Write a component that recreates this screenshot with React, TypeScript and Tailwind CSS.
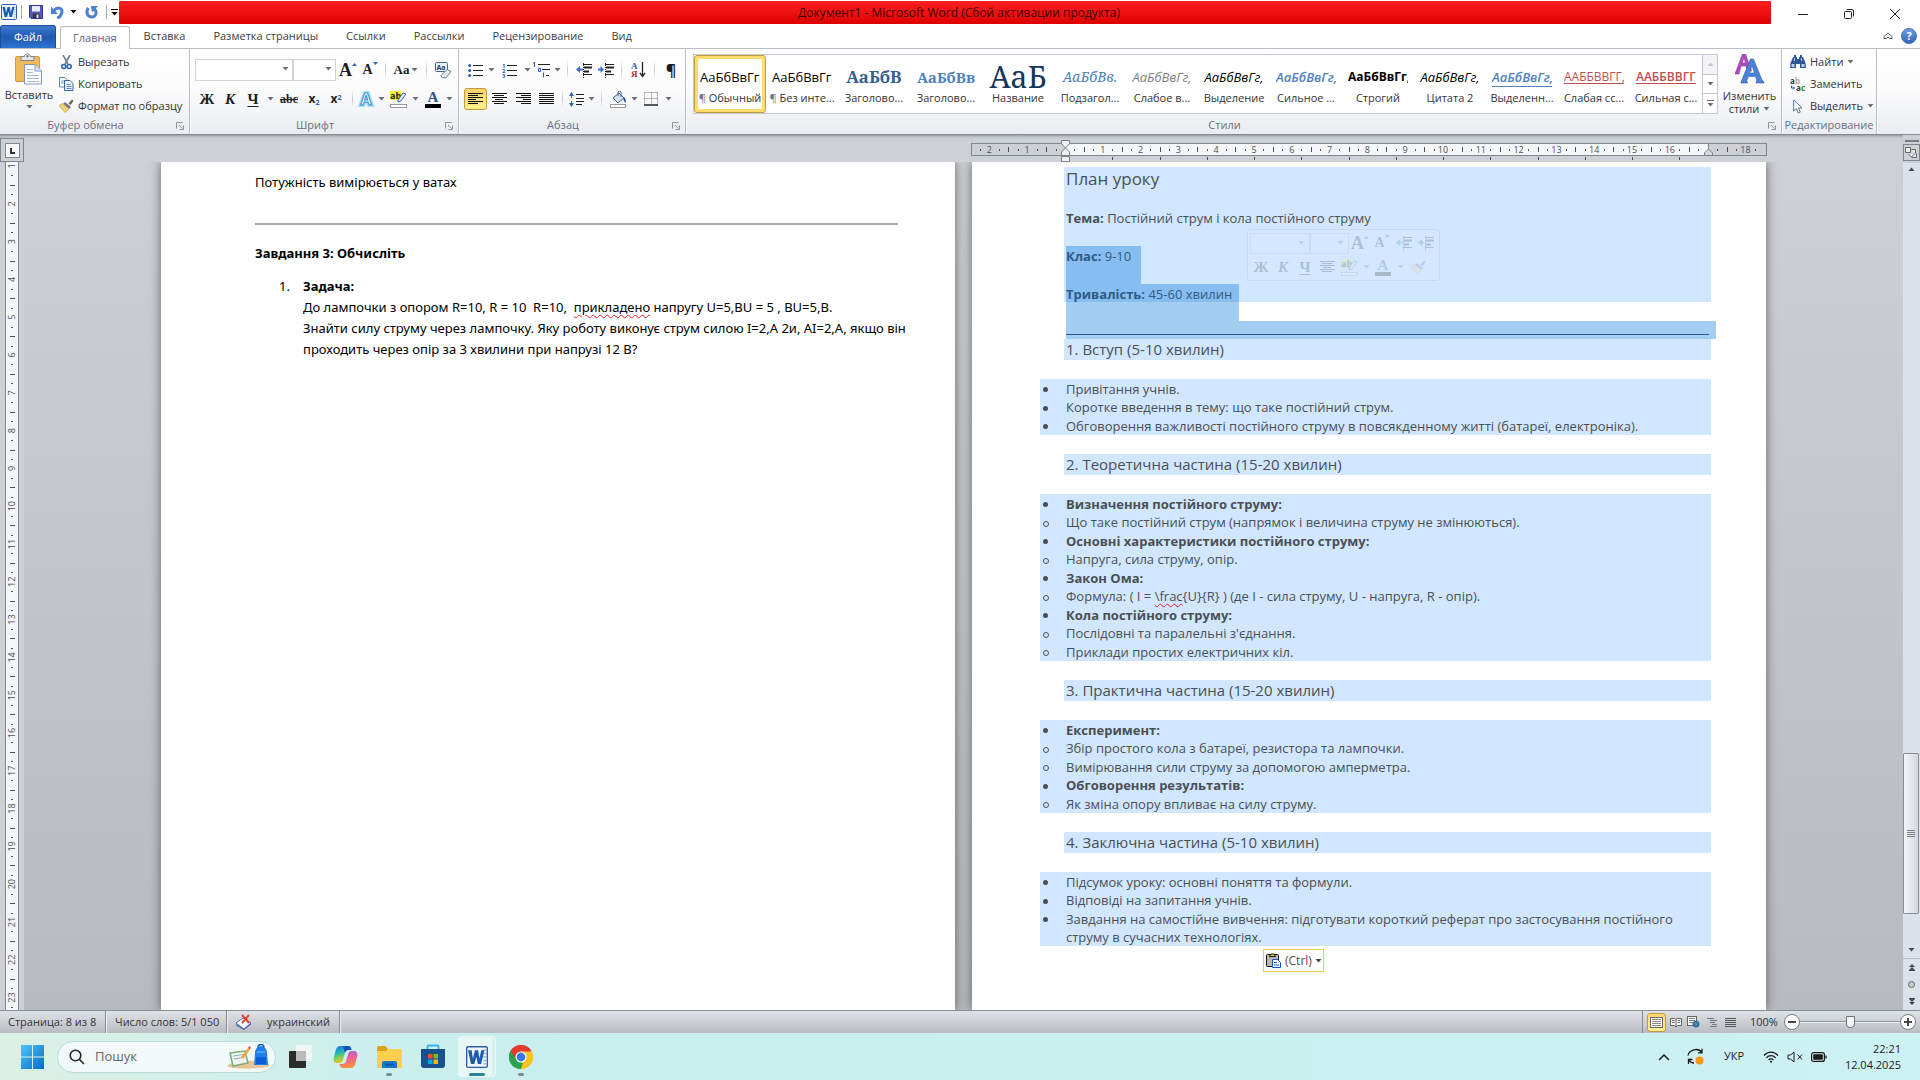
import type { ReactNode } from "react";
import clsx from "clsx";

const CM = 37.8;

const tabs = ["Главная", "Вставка", "Разметка страницы", "Ссылки", "Рассылки", "Рецензирование", "Вид"];

type StyleItem = { label: string; sample: string; look: string; mark?: boolean };

const styleItems: StyleItem[] = [
  { label: "Обычный", sample: "АаБбВвГг,", look: "text-[13px] text-black", mark: true },
  { label: "Без инте...", sample: "АаБбВвГг,", look: "text-[13px] text-black", mark: true },
  { label: "Заголово...", sample: "АаБбВ", look: "font-[Noto_Serif,Liberation_Serif,serif] text-[17px] font-bold text-[#365f91]" },
  { label: "Заголово...", sample: "АаБбВв", look: "font-[Noto_Serif,Liberation_Serif,serif] text-[15px] font-bold text-[#4f81bd]" },
  { label: "Название", sample: "АаБ", look: "font-[Noto_Serif,Liberation_Serif,serif] text-[30px] text-[#17365d]" },
  { label: "Подзагол...", sample: "АаБбВв.", look: "font-[Noto_Serif,Liberation_Serif,serif] text-[14px] italic text-[#4f81bd]" },
  { label: "Слабое в...", sample: "АаБбВвГг,", look: "text-[13px] italic text-[#808080]" },
  { label: "Выделение", sample: "АаБбВвГг,", look: "text-[13px] italic text-black" },
  { label: "Сильное ...", sample: "АаБбВвГг,", look: "text-[13px] font-semibold italic text-[#4f81bd]" },
  { label: "Строгий", sample: "АаБбВвГг,", look: "text-[12px] font-bold text-black" },
  { label: "Цитата 2", sample: "АаБбВвГг,", look: "text-[13px] italic text-black" },
  { label: "Выделенн...", sample: "АаБбВвГг,", look: "text-[13px] font-semibold italic text-[#4f81bd] underline underline-offset-4" },
  { label: "Слабая сс...", sample: "ААБбВвГг,", look: "text-[12px] uppercase text-[#c0504d] underline underline-offset-2" },
  { label: "Сильная с...", sample: "ААБбВвГг,", look: "text-[12px] font-semibold uppercase text-[#c0504d] underline underline-offset-2" },
];

type Line = { level: 1 | 2; text: ReactNode; bold?: boolean };
type Section = { title: string; height: string; lines: Line[] };

const sections: Section[] = [
  {
    title: "1. Вступ (5-10 хвилин)",
    height: "min-h-[56px]",
    lines: [
      { level: 1, text: "Привітання учнів." },
      { level: 1, text: "Коротке введення в тему: що таке постійний струм." },
      { level: 1, text: "Обговорення важливості постійного струму в повсякденному житті (батареї, електроніка)." },
    ],
  },
  {
    title: "2. Теоретична частина (15-20 хвилин)",
    height: "min-h-[167px]",
    lines: [
      { level: 1, bold: true, text: "Визначення постійного струму:" },
      { level: 2, text: "Що таке постійний струм (напрямок і величина струму не змінюються)." },
      { level: 1, bold: true, text: "Основні характеристики постійного струму:" },
      { level: 2, text: "Напруга, сила струму, опір." },
      { level: 1, bold: true, text: "Закон Ома:" },
      {
        level: 2,
        text: (
          <>
            Формула: ( I = <Misspelled>\frac</Misspelled>{"{U}{R} ) (де I - сила струму, U - напруга, R - опір)."}
          </>
        ),
      },
      { level: 1, bold: true, text: "Кола постійного струму:" },
      { level: 2, text: "Послідовні та паралельні з'єднання." },
      { level: 2, text: "Приклади простих електричних кіл." },
    ],
  },
  {
    title: "3. Практична частина (15-20 хвилин)",
    height: "min-h-[93px]",
    lines: [
      { level: 1, bold: true, text: "Експеримент:" },
      { level: 2, text: "Збір простого кола з батареї, резистора та лампочки." },
      { level: 2, text: "Вимірювання сили струму за допомогою амперметра." },
      { level: 1, bold: true, text: "Обговорення результатів:" },
      { level: 2, text: "Як зміна опору впливає на силу струму." },
    ],
  },
  {
    title: "4. Заключна частина (5-10 хвилин)",
    height: "min-h-[74px]",
    lines: [
      { level: 1, text: "Підсумок уроку: основні поняття та формули." },
      { level: 1, text: "Відповіді на запитання учнів." },
      {
        level: 1,
        text: (
          <>
            Завдання на самостійне вивчення: підготувати короткий реферат про застосування постійного
            <br />
            струму в сучасних технологіях.
          </>
        ),
      },
    ],
  },
];

function Misspelled({ children }: { children: ReactNode }) {
  return <span className="underline decoration-[#e02020] decoration-wavy decoration-1 underline-offset-2">{children}</span>;
}

/* ---------- small pieces ---------- */

function Arrow({ className = "text-[#6b6f75]" }: { className?: string }) {
  return (
    <svg width="7" height="4" viewBox="0 0 7 4" className={clsx("shrink-0", className)} aria-hidden>
      <path d="M0.5 0h6L3.5 3.6z" fill="currentColor" />
    </svg>
  );
}

function Tool({ label, w, children, active }: { label: string; w: string; children: ReactNode; active?: boolean }) {
  return (
    <button
      aria-label={label}
      className={clsx(
        "flex h-[22px] shrink-0 items-center justify-center text-[#1e1e1e]",
        w,
        active && "rounded-[3px] border border-[#c29b3f] bg-linear-to-b from-[#fbd36b] to-[#fff08a]"
      )}
    >
      {children}
    </button>
  );
}

function Sep({ w }: { w: string }) {
  return (
    <span className={clsx("flex h-5 shrink-0 justify-center", w)}>
      <span className="w-px bg-linear-to-b from-white via-[#c3c7cc] to-white" />
    </span>
  );
}

function Group({ title, className, launcher = true, children }: { title: string; className?: string; launcher?: boolean; children: ReactNode }) {
  return (
    <section className={clsx("flex shrink-0 flex-col border-r border-[#b9bdc4] shadow-[1px_0_0_#fff]", className)}>
      <div className="flex-1">{children}</div>
      <div className="flex h-[17px] items-center text-[11px] text-[#6a7080]">
        <span className="flex-1 text-center">{title}</span>
        {launcher && (
          <button aria-label={`${title}: параметры`} className="flex w-[18px] justify-center">
            <svg width="8" height="8" viewBox="0 0 8 8" fill="none" stroke="#8d9198">
              <path d="M.5 6.5v-6h6M3 3l3.5 3.5M7.5 3.5v4h-4" />
            </svg>
          </button>
        )}
      </div>
    </section>
  );
}

/* ---------- icons ---------- */

function WordIcon({ size }: { size: number }) {
  return (
    <svg width={size} height={size} viewBox="0 0 16 16" aria-hidden>
      <rect x=".5" y=".5" width="15" height="15" rx="1" fill="#eef5fd" stroke="#2b5ea7" />
      <path d="M12.500 3h2M12.500 5.500h2M12.500 8h2M12.500 10.500h2M12.500 13h2" stroke="#8db3e2" />
      <path d="M1.500 3h2.600l.9 6 1.500-6h2.300l1 6 1.300-6h2.300L11 13H8.600L7.500 7.800 6 13H3.600z" fill="#1c5cae" />
    </svg>
  );
}

function SaveIcon() {
  return (
    <svg width="14" height="14" viewBox="0 0 14 14" aria-hidden>
      <path d="M.5.500h13v13H2L.500 12z" fill="#5558b8" stroke="#34379a" />
      <path d="M3 1h8v5.500H3z" fill="#e8ecf8" />
      <path d="M4 8.500h6.500V13H4z" fill="#34343c" />
      <path d="M7.500 9.500h2V13h-2z" fill="#dfe3ee" />
    </svg>
  );
}

function UndoIcon() {
  return (
    <svg width="13" height="13" viewBox="0 0 13 13" fill="none" aria-hidden>
      <path d="M3 4.500C6 .800 11 1.500 11 5.500c0 3-2 5-4.500 7" stroke="#4a7fd2" strokeWidth="3" />
      <path d="M0 .500v7.500h7z" fill="#4a7fd2" />
    </svg>
  );
}

function RedoIcon() {
  return (
    <svg width="13" height="13" viewBox="0 0 13 13" fill="none" aria-hidden>
      <path d="M3.500 2C.800 5 1.500 10.500 6.500 11c4.500 0 6-5 3-8" stroke="#4a7fd2" strokeWidth="3" />
      <path d="M6 0h7L7 6.500z" fill="#4a7fd2" />
    </svg>
  );
}

function PasteIcon() {
  return (
    <svg width="28" height="32" viewBox="0 0 28 32" aria-hidden>
      <rect x=".5" y="3.500" width="24" height="25" rx="1.500" fill="#f0b95a" stroke="#d29a3c" />
      <path d="M6 7.500V3.500h3.500C9.500 0 15.500 0 15.500 3.500H19v4z" fill="#e4e7ea" stroke="#7c8288" />
      <circle cx="12.500" cy="3.200" r="1.200" fill="#7c8288" />
      <path d="M9.500 11.500H20l6.500 6.500v13h-17z" fill="#fff" stroke="#8095b5" />
      <path d="M20 11.500V18h6.500" fill="#dde6f3" stroke="#8095b5" />
      <path d="M12 16.500h6M12 19.500h6M12 22.500h12M12 25.500h12M12 28.500h12" stroke="#a5b6d0" />
    </svg>
  );
}

function CutIcon() {
  return (
    <svg width="11" height="15" viewBox="0 0 11 15" fill="none" aria-hidden>
      <path d="M2 0l5 9M9 0L4 9" stroke="#6f7f92" strokeWidth="1.600" />
      <circle cx="2.800" cy="11.500" r="2" stroke="#2d5fae" strokeWidth="1.600" />
      <circle cx="8.200" cy="11.500" r="2" stroke="#2d5fae" strokeWidth="1.600" />
    </svg>
  );
}

function CopyIcon() {
  return (
    <svg width="15" height="14" viewBox="0 0 15 14" aria-hidden>
      <path d="M.5.500H6L8.500 3v7H.500z" fill="#fff" stroke="#5f85bf" />
      <path d="M2 4h4M2 6h4" stroke="#7ba0d8" />
      <path d="M5.500 3.500h5.500L14 6.500v7H5.500z" fill="#eaf2fd" stroke="#3465a8" />
      <path d="M7.500 7.500h4M7.500 9.500h5M7.500 11.500h5" stroke="#5588cf" />
    </svg>
  );
}

function BrushIcon() {
  return (
    <svg width="15" height="14" viewBox="0 0 15 14" aria-hidden>
      <path d="M9.500 4.500L13 .500l1.500 1.500L11.500 6z" fill="#6a655c" />
      <path d="M6 3l6 5-2 2-6-4.500z" fill="#7b6f9c" />
      <path d="M4 4.500L0 6.500l6 7 4-3.500z" fill="#efd37a" stroke="#c39b3b" strokeWidth=".7" />
    </svg>
  );
}

function EraserIcon() {
  return (
    <svg width="18" height="17" viewBox="0 0 18 17" aria-hidden>
      <rect x="1.500" y=".5" width="12" height="9" rx="1" fill="#e9f1fb" stroke="#4c6591" />
      <text x="2.500" y="8" fontSize="7" fontWeight="700" fill="#27406e">Aa</text>
      <path d="M7 13.500L13 7.500l4 2-5 6.500-4-.5z" fill="#e6ecf5" stroke="#6d82a6" />
    </svg>
  );
}

function GrowLetter({ up }: { up?: boolean }) {
  return (
    <span className={clsx("flex items-start font-[Liberation_Serif,serif] font-bold leading-4", up ? "text-[18px]" : "text-[14px]")}>
      A
      <svg width="5" height="4" viewBox="0 0 5 4" aria-hidden>
        <path d={up ? "M0 4h5L2.500 1z" : "M0 0h5L2.500 3z"} fill="#3c62ad" />
      </svg>
    </span>
  );
}

function GlowLetter() {
  return (
    <svg width="18" height="18" viewBox="0 0 18 18" aria-hidden>
      <text x="9" y="15" fontSize="16" fontWeight="700" textAnchor="middle" fill="#fff" stroke="#a9daf3" strokeWidth="4">A</text>
      <text x="9" y="15" fontSize="16" fontWeight="700" textAnchor="middle" fill="#fff" stroke="#3a92cf" strokeWidth="1">A</text>
    </svg>
  );
}

function HighlightIcon() {
  return (
    <svg width="17" height="17" viewBox="0 0 17 17" aria-hidden>
      <rect x="0" y="0" width="11" height="9" fill="#f6ec3e" />
      <text x="0" y="8" fontSize="9" fontWeight="700" fill="#222">ab</text>
      <path d="M8 9l5-7 3 1-5 7-3 1z" fill="#dfe9f8" stroke="#4d6a9e" />
      <rect x=".5" y="13.500" width="16" height="3" fill="#fff" stroke="#9a9a9a" />
    </svg>
  );
}

function FontColor() {
  return (
    <span className="flex w-4 flex-col items-center font-[Liberation_Serif,serif] text-[15px] font-bold leading-[13px] text-[#2f4f8f]">
      A
      <span className="h-1 w-full bg-black" />
    </span>
  );
}

function AlignIcon({ kind }: { kind: "left" | "center" | "right" | "full" }) {
  const short = [14, 10, 14, 8, 14, 10];
  return (
    <svg width="15" height="12" viewBox="0 0 15 12" aria-hidden>
      {short.map((w, i) => {
        const len = kind === "full" ? 15 : w + (w === 14 ? 1 : 0);
        const x = kind === "center" ? Math.floor((15 - len) / 2) : kind === "right" ? 15 - len : 0;
        return <rect key={i} x={x} y={i * 2} width={len} height="1" fill="#111" />;
      })}
    </svg>
  );
}

function ListIcon({ kind }: { kind: "dots" | "numbers" | "levels" }) {
  if (kind === "levels") {
    return (
      <svg width="18" height="16" viewBox="0 0 18 16" aria-hidden>
        <path d="M5 2.500h12M9 7.500h8M13 13.500h3" stroke="#222" />
        <path d="M1.500 0v5M0 1h2M5.500 6.500v3h2v-3zM10.500 10.500v5" stroke="#2c5cb0" fill="none" />
      </svg>
    );
  }
  return (
    <svg width="15" height="15" viewBox="0 0 15 15" aria-hidden>
      {[2, 7, 12].map((y, i) =>
        kind === "dots" ? (
          <circle key={y} cx="1.700" cy={y + 0.5} r="1.500" fill="#2c5cb0" />
        ) : (
          <text key={y} x="0" y={y + 3} fontSize="6" fontWeight="700" fill="#2c5cb0">
            {i + 1}
          </text>
        )
      )}
      <path d="M5 2.500h10M5 7.500h10M5 12.500h10" stroke="#222" />
    </svg>
  );
}

function IndentIcon({ out }: { out?: boolean }) {
  return (
    <svg width="16" height="15" viewBox="0 0 16 15" aria-hidden>
      <path d="M7 1.500h9M7 11.500h9" stroke="#222" />
      <path d="M8 4.500h8M8 8.500h5" stroke="#222" strokeWidth="2" />
      <path d="M7.500 0v15" stroke="#222" strokeDasharray="1 1" />
      <path d={out ? "M0 6.500L4 3v2.500h3v2H4V10z" : "M6 6.500L2.500 3v2.500H0v2h2.500V10z"} fill="#3d6fc7" />
    </svg>
  );
}

function SortIcon() {
  return (
    <svg width="15" height="16" viewBox="0 0 15 16" aria-hidden>
      <text x="0" y="7" fontSize="9" fontWeight="700" fontFamily="Liberation Serif" fill="#2f5597">А</text>
      <text x="0" y="15" fontSize="9" fontWeight="700" fontFamily="Liberation Serif" fill="#a5343a">Я</text>
      <path d="M11.500 0v13M9 11l2.500 3.500L14 11" stroke="#222" fill="none" strokeWidth="1.300" />
    </svg>
  );
}

function SpacingIcon() {
  return (
    <svg width="15" height="17" viewBox="0 0 15 17" aria-hidden>
      <path d="M0 5l2.500-4L5 5zM0 12l2.500 4L5 12z" fill="#3665b5" />
      <path d="M2.500 4v3M2.500 10v3" stroke="#3665b5" />
      <path d="M7 3.500h8M7 7.500h8M7 10.500h8M7 13.500h6" stroke="#222" />
    </svg>
  );
}

function BucketIcon() {
  return (
    <svg width="17" height="17" viewBox="0 0 17 17" aria-hidden>
      <path d="M3 7l6-5 5 5-6 5z" fill="#d5e0f0" stroke="#46618f" />
      <path d="M8 5V1.500a1.500 1.500 0 013 0V6" fill="none" stroke="#46618f" />
      <path d="M14 6c2 2 2 4 1.500 6-1-1-2-2-2-5z" fill="#284d94" />
      <rect x=".5" y="13.500" width="15" height="3" fill="#fff" stroke="#9a9a9a" />
    </svg>
  );
}

function BorderIcon() {
  return (
    <svg width="14" height="14" viewBox="0 0 14 14" fill="none" aria-hidden>
      <path d="M.5.500h13M.500.500v12M13.500.500v12M7.500.500v12M.500 6.500h13" stroke="#777" strokeDasharray="1 1" />
      <path d="M0 13h14" stroke="#222" strokeWidth="1.500" />
    </svg>
  );
}

function ChangeStylesIcon() {
  return (
    <svg width="30" height="30" viewBox="0 0 30 30" aria-hidden>
      <path d="M0 20L7.500 0h3l6 17h-4l-1.500-5H6l-2 8zM7 9h3.500L9 4z" fill="#b04cc0" stroke="#8a3a9c" strokeWidth=".6" fillRule="evenodd" />
      <path d="M6 28L15.500 5h3L27 26l2 2v1h-8v-1l1-1-1.500-4.500h-7L11.500 27l1 1v1H6zM14.500 19h5L17 11.500z" fill="#4d82d8" stroke="#2b5cae" strokeWidth=".6" fillRule="evenodd" />
    </svg>
  );
}

function FindIcon() {
  return (
    <svg width="16" height="14" viewBox="0 0 16 14" aria-hidden>
      <path d="M4 0h2v2h1v2h2V2h1V0h2v2h1l2.500 6 .5 5H10V9H6v4H0l.5-5L3 2h1z" fill="#2f5794" />
      <path d="M1.500 9h3v3h-3zM11.500 9h3v3h-3z" fill="#b9cdec" />
      <path d="M4.500 3v3M11.500 3v3" stroke="#b9cdec" />
    </svg>
  );
}

function ReplaceIcon() {
  return (
    <svg width="16" height="15" viewBox="0 0 16 15" aria-hidden>
      <text x="0" y="7" fontSize="8" fontWeight="700" fill="#333">a</text>
      <text x="5" y="7" fontSize="8" fontWeight="700" fill="#aaa">b</text>
      <text x="6" y="14" fontSize="8" fontWeight="700" fill="#333">a</text>
      <text x="11" y="14" fontSize="8" fontWeight="700" fill="#1d8a2a">c</text>
      <path d="M1.500 8.500v2.500h3M3 9.500L4.500 11 3 12.500" stroke="#2c5cb0" fill="none" />
    </svg>
  );
}

function PointerIcon() {
  return (
    <svg width="10" height="15" viewBox="0 0 10 15" aria-hidden>
      <path d="M.7 1v11l2.600-2.500L5.300 14l2-.9L5.400 9H9z" fill="#fff" stroke="#54709c" />
    </svg>
  );
}

/* ---------- window top ---------- */

function TitleBar() {
  return (
    <header className="flex h-6 bg-white">
      <div className="flex w-[119px] items-center pl-px">
        <WordIcon size={16} />
        <span className="ml-1 h-3.5 w-px bg-[#a5a5a5]" />
        <button aria-label="Сохранить" className="ml-[7px]"><SaveIcon /></button>
        <button aria-label="Отменить" className="ml-2"><UndoIcon /></button>
        <Arrow className="ml-1.5 text-black" />
        <button aria-label="Повторить" className="ml-2"><RedoIcon /></button>
        <span className="ml-2 h-3.5 w-px bg-[#a5a5a5]" />
        <button aria-label="Настройка панели быстрого доступа" className="ml-1 flex flex-col items-center gap-0.5">
          <span className="h-px w-[7px] bg-black" />
          <Arrow className="text-black" />
        </button>
      </div>
      <h1 className="mt-px flex flex-1 items-center justify-center rounded-[1px] bg-linear-to-b from-[#ff1f1f] to-[#dc0000] pl-7 text-[12px] text-[#3d0000]">
        Документ1 - Microsoft Word (Сбой активации продукта)
      </h1>
      <div className="flex w-[149px] justify-end pt-1 pr-0.5 text-[#222]">
        <button aria-label="Свернуть" className="flex w-[46px] items-center justify-center">
          <svg width="10" height="10" viewBox="0 0 10 10"><path d="M0 5.500h10" stroke="currentColor" /></svg>
        </button>
        <button aria-label="Восстановить" className="flex w-[46px] items-center justify-center">
          <svg width="10" height="10" viewBox="0 0 10 10" fill="none" stroke="currentColor"><rect x=".5" y="2.500" width="7" height="7" rx="1" /><path d="M2.500.500H8A1.500 1.500 0 019.500 2v5.500" /></svg>
        </button>
        <button aria-label="Закрыть" className="flex w-[46px] items-center justify-center">
          <svg width="10" height="10" viewBox="0 0 10 10" stroke="currentColor"><path d="M0 0l10 10M10 0L0 10" /></svg>
        </button>
      </div>
    </header>
  );
}

function TabRow() {
  return (
    <nav className="flex h-[25px] items-end border-b border-[#b9bdc4] bg-white text-[11px] text-[#3c3c3c]">
      <button className="h-[23px] w-14 rounded-t-[3px] border border-b-0 border-[#1c4f9c] bg-linear-to-b from-[#3f7bd0] via-[#2059b0] to-[#2f74d2] text-white">
        Файл
      </button>
      {tabs.map((t, i) => (
        <button
          key={t}
          className={clsx("h-[23px]", i === 0 ? "-mb-px ml-1 rounded-t-[3px] border border-b-0 border-[#b9bdc4] bg-white px-3 text-[#5a6478]" : "px-[14px]")}
        >
          {t}
        </button>
      ))}
      <div className="ml-auto flex h-full items-center gap-2 pr-[3px]">
        <button aria-label="Свернуть ленту">
          <svg width="10" height="8" viewBox="0 0 10 8" fill="none" stroke="#555"><path d="M1 4.500L5 1l4 3.500v2H7L5 5 3 6.500H1z" /></svg>
        </button>
        <button aria-label="Справка" className="size-4 rounded-full border border-[#3c6bb5] bg-linear-to-b from-[#6f9fe0] to-[#3465bb] text-[11px] leading-3 font-bold text-white">
          ?
        </button>
      </div>
    </nav>
  );
}

function ClipboardGroup() {
  const rows: [ReactNode, string][] = [
    [<CutIcon />, "Вырезать"],
    [<CopyIcon />, "Копировать"],
    [<BrushIcon />, "Формат по образцу"],
  ];
  return (
    <Group title="Буфер обмена" className="w-[190px]">
      <div className="flex">
        <button className="flex w-[58px] flex-col items-center pt-1 text-[11px] text-[#333]">
          <PasteIcon />
          <span className="mt-0.5 leading-4">Вставить</span>
          <Arrow className="mt-0.5 text-[#6b6f75]" />
        </button>
        <div className="flex flex-col pt-0.5">
          {rows.map(([icon, text]) => (
            <button key={text} className="flex h-[22px] items-center gap-1 text-[11px] text-[#333]">
              <span className="flex w-4 justify-center">{icon}</span>
              {text}
            </button>
          ))}
        </div>
      </div>
    </Group>
  );
}

function ComboBox({ label, w }: { label: string; w: string }) {
  return (
    <span className={clsx("relative h-[22px] shrink-0", w)}>
      <select aria-label={label} className="size-full appearance-none border border-[#cfd2d6] bg-white">
        <option></option>
      </select>
      <Arrow className="pointer-events-none absolute top-2 right-1 text-[#6b6f75]" />
    </span>
  );
}

function FontGroup() {
  return (
    <Group title="Шрифт" className="w-[269px]">
      <div className="flex items-center pt-2.5 pl-[5px]">
        <ComboBox label="Шрифт" w="w-[98px]" />
        <ComboBox label="Размер шрифта" w="w-[43px]" />
        <Tool label="Увеличить размер" w="w-6"><GrowLetter up /></Tool>
        <Tool label="Уменьшить размер" w="w-5"><GrowLetter /></Tool>
        <Sep w="w-2.5" />
        <Tool label="Регистр" w="w-8">
          <span className="mr-0.5 font-[Liberation_Serif,serif] text-[13px] font-bold">Aa</span>
          <Arrow />
        </Tool>
        <Sep w="w-2" />
        <Tool label="Очистить формат" w="w-[26px]"><EraserIcon /></Tool>
      </div>
      <div className="flex items-center pt-[7px] pl-[5px]">
        <Tool label="Полужирный" w="w-6"><b className="font-[Liberation_Serif,serif] text-[15px]">Ж</b></Tool>
        <Tool label="Курсив" w="w-[22px]"><b className="font-[Liberation_Serif,serif] text-[15px] italic">К</b></Tool>
        <Tool label="Подчеркнутый" w="w-6"><b className="font-[Liberation_Serif,serif] text-[15px] underline underline-offset-2">Ч</b></Tool>
        <Tool label="Вид подчеркивания" w="w-2.5"><Arrow /></Tool>
        <Tool label="Зачеркнутый" w="w-7"><b className="font-[Liberation_Serif,serif] text-[12px] line-through">abc</b></Tool>
        <Tool label="Подстрочный знак" w="w-[22px]"><b className="text-[12px]">x<sub className="text-[7px] text-[#2c5cb0]">2</sub></b></Tool>
        <Tool label="Надстрочный знак" w="w-[22px]"><b className="text-[12px]">x<sup className="text-[7px] text-[#2c5cb0]">2</sup></b></Tool>
        <Sep w="w-2.5" />
        <Tool label="Текстовые эффекты" w="w-[18px]"><GlowLetter /></Tool>
        <Tool label="Виды эффектов" w="w-3"><Arrow /></Tool>
        <Tool label="Цвет выделения" w="w-[22px]"><HighlightIcon /></Tool>
        <Tool label="Цвета выделения" w="w-3"><Arrow /></Tool>
        <Tool label="Цвет текста" w="w-6"><FontColor /></Tool>
        <Tool label="Цвета текста" w="w-2"><Arrow /></Tool>
      </div>
    </Group>
  );
}

function ParagraphGroup() {
  return (
    <Group title="Абзац" className="w-[227px]">
      <div className="flex items-center pt-2.5 pl-1">
        <Tool label="Маркеры" w="w-6"><ListIcon kind="dots" /></Tool>
        <Tool label="Виды маркеров" w="w-2"><Arrow /></Tool>
        <Tool label="Нумерация" w="w-7"><ListIcon kind="numbers" /></Tool>
        <Tool label="Виды нумерации" w="w-2"><Arrow /></Tool>
        <Tool label="Многоуровневый список" w="w-[22px]"><ListIcon kind="levels" /></Tool>
        <Tool label="Виды списков" w="w-2"><Arrow /></Tool>
        <Sep w="w-3" />
        <Tool label="Уменьшить отступ" w="w-[22px]"><IndentIcon out /></Tool>
        <Tool label="Увеличить отступ" w="w-[22px]"><IndentIcon /></Tool>
        <Sep w="w-2" />
        <Tool label="Сортировка" w="w-[26px]"><SortIcon /></Tool>
        <Sep w="w-1.5" />
        <Tool label="Все знаки" w="w-7"><span className="text-[16px] font-bold">¶</span></Tool>
      </div>
      <div className="flex items-center pt-[7px] pl-[5px]">
        <Tool label="По левому краю" w="w-[23px]" active><AlignIcon kind="left" /></Tool>
        <Tool label="По центру" w="w-6"><AlignIcon kind="center" /></Tool>
        <Tool label="По правому краю" w="w-6"><AlignIcon kind="right" /></Tool>
        <Tool label="По ширине" w="w-[23px]"><AlignIcon kind="full" /></Tool>
        <Sep w="w-2" />
        <Tool label="Интервал" w="w-5"><SpacingIcon /></Tool>
        <Tool label="Виды интервала" w="w-2.5"><Arrow /></Tool>
        <Sep w="w-2.5" />
        <Tool label="Заливка" w="w-6"><BucketIcon /></Tool>
        <Tool label="Цвета заливки" w="w-2"><Arrow /></Tool>
        <Tool label="Границы" w="w-[26px]"><BorderIcon /></Tool>
        <Tool label="Виды границ" w="w-2"><Arrow /></Tool>
      </div>
    </Group>
  );
}

function StylesGroup() {
  return (
    <Group title="Стили">
      <div className="flex pt-[5px] pl-[7px]">
        <div className="flex h-[60px] border border-[#c6c9ce] bg-white">
          {styleItems.map((s, i) => (
            <button
              key={i}
              className={clsx(
                "flex w-[72px] flex-col items-center overflow-hidden border px-1 pt-2",
                i === 0 ? "rounded-[3px] border-[#c29b3f] shadow-[inset_0_0_0_3px_#ffdc6b]" : "border-transparent"
              )}
            >
              <span className={clsx("h-[26px] w-[60px] shrink-0 overflow-hidden text-center leading-[26px] whitespace-nowrap", s.look)}>
                {s.sample}
              </span>
              <span className="text-[11px] leading-4 whitespace-nowrap text-[#333]">
                {s.mark && <span className="text-[#6b7690]">¶ </span>}
                {s.label}
              </span>
            </button>
          ))}
          <div className="flex w-[15px] flex-col border-l border-[#c6c9ce]">
            <button aria-label="Вверх" className="flex flex-1 items-center justify-center bg-[#f3f4f6]"><Arrow className="rotate-180 text-[#c3c6ca]" /></button>
            <button aria-label="Вниз" className="flex flex-1 items-center justify-center border-y border-[#c6c9ce]"><Arrow /></button>
            <button aria-label="Дополнительно" className="flex flex-1 flex-col items-center justify-center gap-0.5">
              <span className="h-px w-[7px] bg-[#6b6f75]" />
              <Arrow />
            </button>
          </div>
        </div>
        <button className="flex w-[63px] flex-col items-center text-[11px] leading-[13px] text-[#333]">
          <ChangeStylesIcon />
          <span className="mt-[5px]">Изменить</span>
          <span className="flex items-center gap-1">стили <Arrow /></span>
        </button>
      </div>
    </Group>
  );
}

function EditingGroup() {
  const rows: [ReactNode, string, boolean][] = [
    [<FindIcon />, "Найти", true],
    [<ReplaceIcon />, "Заменить", false],
    [<PointerIcon />, "Выделить", true],
  ];
  return (
    <Group title="Редактирование" className="w-[95px]" launcher={false}>
      <div className="flex flex-col pt-0.5 pl-2">
        {rows.map(([icon, text, more]) => (
          <button key={text} className="flex h-[22px] items-center gap-1 text-[11px] text-[#333]">
            <span className="flex w-4 justify-center">{icon}</span>
            {text}
            {more && <Arrow />}
          </button>
        ))}
      </div>
    </Group>
  );
}

/* ---------- rulers ---------- */

function HorizontalRuler() {
  const zero = 94;
  const marks = Array.from({ length: 85 }, (_, i) => i - 10).filter(q => zero + (q * CM) / 4 < 790 && zero + (q * CM) / 4 > 3);
  return (
    <svg width="796" height="22" className="shrink-0" aria-hidden>
      <rect x=".5" y="3.500" width="795" height="12" fill="#cdd0d5" stroke="#7f868e" />
      <rect x={zero} y="4" width="643" height="11" fill="#f5f6f7" />
      {marks.map(q => {
        const x = zero + (q * CM) / 4;
        if (q === 0 || q === 68) return null;
        if (q % 4 === 0) {
          return (
            <text key={q} x={x} y="13" fontSize="9" textAnchor="middle" fill="#4b5056">
              {Math.abs(q / 4)}
            </text>
          );
        }
        return q % 2 === 0 ? (
          <rect key={q} x={Math.round(x)} y="7" width="1" height="5" fill="#4b5056" />
        ) : (
          <rect key={q} x={Math.round(x)} y="9" width="1" height="2" fill="#4b5056" />
        );
      })}
      {Array.from({ length: 13 }, (_, i) => (
        <rect key={i} x={Math.round(zero + (i + 1) * CM * 1.25)} y="17" width="1" height="3" fill="#4b5056" />
      ))}
      <path d="M90.500.500h8v3L94.500 8l-4-4.500zM94.500 8l4 4v3.500h-8V12zM90.500 16.500h8v5h-8z" fill="#f0f1f2" stroke="#7b7f84" />
      <path d="M737.500 3v6l4 4v2.500h-8V13l4-4" fill="#d8dadd" stroke="#7b7f84" />
    </svg>
  );
}

function VerticalRuler() {
  const marks = Array.from({ length: 92 }, (_, i) => i + 4);
  return (
    <svg className="h-full w-6 shrink-0 bg-[#cdd0d5]" aria-hidden>
      <rect x="5" y="0" width="14" height="100%" fill="#f5f6f7" />
      <path d="M5.500 0v900M18.500 0v900" stroke="#7f868e" />
      {marks.map(q => {
        const y = 4 + ((q - 4) * CM) / 4;
        if (q % 4 === 0) {
          return (
            <text key={q} x="15" y={y} fontSize="9" textAnchor="middle" fill="#4b5056" transform={`rotate(-90 15 ${y})`}>
              {q / 4}
            </text>
          );
        }
        return q % 2 === 0 ? (
          <rect key={q} x="10" y={Math.round(y)} width="5" height="1" fill="#4b5056" />
        ) : (
          <rect key={q} x="11" y={Math.round(y)} width="2" height="1" fill="#4b5056" />
        );
      })}
    </svg>
  );
}

/* ---------- document ---------- */

function LeftPage() {
  return (
    <article className="w-[794px] shrink-0 bg-white pt-2.5 pr-[57px] pl-[94px] font-[Noto_Sans,Open_Sans,sans-serif] text-[13px] leading-[21px] text-black shadow-[0_0_10px_rgba(70,75,80,0.8)]">
      <p>Потужність вимірюється у ватах</p>
      <hr className="mt-[30px] border-t-2 border-[#a8a8a8]" />
      <h2 className="mt-[18px] font-bold">Завдання 3: Обчисліть</h2>
      <ol className="mt-3 pl-6">
        <li className="flex whitespace-nowrap">
          <span className="w-6 shrink-0">1.</span>
          <span>
            <b>Задача:</b>
            <br />
            До лампочки з опором R=10, R = 10&nbsp; R=10,&nbsp; <Misspelled>прикладено</Misspelled> напругу U=5,BU = 5 , BU=5,В.
            <br />
            Знайти силу струму через лампочку. Яку роботу виконує струм силою I=2,A 2и, AI=2,A, якщо він
            <br />
            проходить через опір за 3 хвилини при напрузі 12 В?
          </span>
        </li>
      </ol>
    </article>
  );
}

function MiniToolbar() {
  return (
    <div className="absolute top-[67px] left-[275px] w-[193px] rounded-[3px] border border-[#8fa5d2] bg-[#f4f8ff]/40 px-0.5 opacity-20">
      <div className="flex items-center py-0.5">
        <span className="flex h-[21px] w-[61px] items-center justify-end border border-[#9cb0d0] pr-1"><Arrow /></span>
        <span className="flex h-[21px] w-10 items-center justify-end border border-[#9cb0d0] pr-1"><Arrow /></span>
        <Tool label="Крупнее" w="w-[22px]"><GrowLetter up /></Tool>
        <Tool label="Мельче" w="w-[22px]"><GrowLetter /></Tool>
        <Tool label="Отступ влево" w="w-[22px]"><IndentIcon out /></Tool>
        <Tool label="Отступ вправо" w="w-[22px]"><IndentIcon /></Tool>
      </div>
      <div className="flex items-center pb-0.5">
        <Tool label="Ж" w="w-[22px]"><b className="font-[Liberation_Serif,serif] text-[15px]">Ж</b></Tool>
        <Tool label="К" w="w-[22px]"><b className="font-[Liberation_Serif,serif] text-[15px] italic">К</b></Tool>
        <Tool label="Ч" w="w-[22px]"><b className="font-[Liberation_Serif,serif] text-[15px] underline underline-offset-2">Ч</b></Tool>
        <Tool label="Центр" w="w-[22px]"><AlignIcon kind="center" /></Tool>
        <Tool label="Выделение" w="w-[22px]"><HighlightIcon /></Tool>
        <Tool label="Выделение цветом" w="w-3"><Arrow /></Tool>
        <Tool label="Цвет" w="w-[22px]"><FontColor /></Tool>
        <Tool label="Выбор цвета" w="w-3"><Arrow /></Tool>
        <Tool label="Формат" w="w-6"><BrushIcon /></Tool>
      </div>
    </div>
  );
}

function RightPage() {
  return (
    <article className="relative flex w-[794px] shrink-0 flex-col bg-white pt-[5px] pr-[55px] pl-[68px] text-[13px] whitespace-nowrap text-[#4b4f54] shadow-[0_0_10px_rgba(70,75,80,0.8)]">
      <div className="ml-6 bg-[linear-gradient(#d1e7ff_135px,transparent_135px)] pl-0.5">
        <h2 className="h-[41px] text-[17px] leading-6">План уроку</h2>
        <p className="h-[38px] leading-5"><b>Тема:</b> Постійний струм і кола постійного струму</p>
        <p className="h-[38px] w-[75px] bg-[#1982dc]/40 leading-5 text-[#2f5b86]"><b>Клас:</b> 9-10</p>
        <p className="h-[37px] w-[173px] bg-[#1982dc]/40 leading-5 text-[#2f5b86]"><b>Тривалість:</b> 45-60 хвилин</p>
        <div className="-mr-[5px] h-[18px] bg-[#a3cdf1] pt-[13px] pr-[7px]">
          <hr className="border-[#27598c]" />
        </div>
      </div>
      {sections.map((s, i) => (
        <section key={s.title} className={clsx("flex flex-col gap-[19px]", i > 0 && "mt-[19px]")}>
          <h3 className="ml-6 bg-[#d1e7ff] pl-0.5 text-[15px] leading-[21px]">{s.title}</h3>
          <ul className={clsx("grid auto-rows-auto content-stretch bg-[#d1e7ff] leading-[18px]", s.height)}>
            {s.lines.map((l, j) => (
              <li key={j} className={clsx("flex items-end", l.bold && "font-bold")}>
                <span className="flex h-[18px] w-[26px] shrink-0 self-start pl-[3px]">
                  <span className={clsx("mt-2 rounded-full", l.level === 1 ? "size-[5px] bg-current" : "size-1.5 border border-current")} />
                </span>
                <span>{l.text}</span>
              </li>
            ))}
          </ul>
        </section>
      ))}
      <MiniToolbar />
      <button className="absolute top-[787px] left-[291px] flex h-[23px] w-[61px] items-center gap-[3px] border border-[#ecd04c] bg-white pl-0.5 text-[12px]">
        <svg width="16" height="15" viewBox="0 0 16 15" aria-hidden>
          <rect x=".5" y="1.500" width="12" height="12" rx="1" fill="#b9b6ae" stroke="#111" />
          <path d="M3.500 3.500L5 1h3l1.500 2.500z" fill="#f4dc4c" stroke="#111" />
          <path d="M6.500 6.500h5l3 3v5h-8z" fill="#fff" stroke="#1552c0" />
          <path d="M8 9.500h3M8 12h5" stroke="#1552c0" />
        </svg>
        (Ctrl)
        <Arrow className="text-[#444]" />
      </button>
    </article>
  );
}

function VerticalScrollbar() {
  return (
    <div className="flex w-[17px] shrink-0 flex-col items-center bg-[#dde1e9]">
      <div className="flex w-full flex-col items-center bg-[#cdd0d5] pt-[5px] pb-0.5">
        <span className="mb-0.5 h-0.5 w-3.5 bg-[#777c84]" />
        <button aria-label="Линейка" className="flex size-[17px] items-center justify-center border border-[#7f868e]">
          <svg width="13" height="13" viewBox="0 0 13 13" fill="#f0f0f0" stroke="#666"><path d="M.5 1.500h5v5h-5zM6.500 3.500h4v4M9.500 8l-3 3-3-3M6.500 11.500h5v-4" /></svg>
        </button>
      </div>
      <button aria-label="Прокрутить вверх" className="mt-1"><Arrow className="rotate-180 text-[#44484e]" /></button>
      <div className="flex w-full flex-1 flex-col pt-[582px]">
        <div className="flex h-[161px] w-4 items-center justify-center rounded-[1px] border border-[#878d96] bg-linear-to-r from-[#f4f6f9] to-[#d4d8de]">
          <svg width="8" height="8" viewBox="0 0 8 8"><path d="M0 .500h8M0 2.500h8M0 4.500h8M0 6.500h8" stroke="#7d828a" /></svg>
        </div>
      </div>
      <button aria-label="Прокрутить вниз" className="mb-1.5"><Arrow className="text-[#44484e]" /></button>
      <div className="flex h-[52px] w-full flex-col items-center justify-around border-t border-[#b5b9c0] text-[#44484e]">
        <button aria-label="Предыдущая страница"><svg width="6" height="7" viewBox="0 0 6 7" fill="currentColor"><path d="M0 3l3-3 3 3zM0 6l3-3 3 3v1H0z" /></svg></button>
        <button aria-label="Выбор объекта" className="size-[7px] rounded-full border border-[#666] bg-[#c8c8c8]" />
        <button aria-label="Следующая страница"><svg width="6" height="7" viewBox="0 0 6 7" fill="currentColor"><path d="M0 0h6v1L3 4 0 1zM0 4h6L3 7z" /></svg></button>
      </div>
    </div>
  );
}

function Workspace() {
  return (
    <main className="flex min-h-0 flex-1 border-t border-[#868b92] bg-[#cdd0d5]">
      <div className="flex min-w-0 flex-1 flex-col">
        <div className="flex h-[27px] shrink-0 items-end shadow-[inset_0_3px_3px_-2px_rgba(80,85,90,0.5)]">
          <button aria-label="Позиция табуляции" className="flex size-6 shrink-0 items-center justify-center border border-[#7f868e]">
            <svg width="15" height="15" viewBox="0 0 15 15"><rect x=".5" y=".5" width="14" height="14" fill="#f8f8f8" stroke="#7f868e" /><path d="M6 5v5h4" stroke="#333" strokeWidth="2" fill="none" /></svg>
          </button>
          <div className="flex flex-1 justify-center gap-4">
            <div className="w-[794px] shrink-0" />
            <HorizontalRuler />
          </div>
        </div>
        <div className="flex min-h-0 flex-1">
          <VerticalRuler />
          <div className="flex flex-1 justify-center gap-[17px] overflow-hidden bg-linear-to-b from-[#cdd0d5] to-[#b7babe]">
            <LeftPage />
            <RightPage />
          </div>
        </div>
      </div>
      <VerticalScrollbar />
    </main>
  );
}

/* ---------- bottom bars ---------- */

function StatusBar() {
  const divider = "border-r border-[#878c93] shadow-[1px_0_0_#eceef0]";
  return (
    <footer className="flex h-[23px] shrink-0 border-t border-[#8a9097] bg-linear-to-b from-[#dfe2e7] to-[#b9bdc2] text-[11px] text-[#333]">
      <button className={clsx("w-[106px] pl-2 text-left", divider)}>Страница: 8 из 8</button>
      <button className={clsx("w-[121px] pl-[9px] text-left", divider)}>Число слов: 5/1 050</button>
      <button aria-label="Правописание" className="flex w-[33px] items-center pl-2">
        <svg width="17" height="16" viewBox="0 0 17 16" aria-hidden>
          <path d="M1 9l7-5 8 5-7 6z" fill="#f5f7fb" stroke="#4b6fae" />
          <path d="M1 10l8 5 7-6v1.500L9 16 1 11.500z" fill="#3f66ad" />
          <path d="M7 1l7 8M14 1L7 9" stroke="#e2452c" strokeWidth="2" />
        </svg>
      </button>
      <button className={clsx("w-[80px] pl-[7px] text-left", divider)}>украинский</button>
      <div className="ml-auto flex items-center border-l border-[#878c93] pl-1">
        <button aria-label="Разметка страницы" className="flex h-[19px] w-[19px] items-center justify-center rounded-[3px] border border-[#c29b3f] bg-linear-to-b from-[#ffd96b] to-[#ffee96]">
          <svg width="13" height="11" viewBox="0 0 13 11"><rect x=".5" y=".5" width="12" height="10" fill="#fff" stroke="#666" /><path d="M2 2.500h9M2 4.500h9M2 6.500h9M2 8.500h9" stroke="#888" /></svg>
        </button>
        <button aria-label="Режим чтения" className="ml-1">
          <svg width="12" height="11" viewBox="0 0 12 11" fill="#f4f4f4" stroke="#666"><path d="M.5 1.500h4L6 2.500l1.500-1h4v7h-4L6 10 4.500 8.500h-4zM6 2.500V10M2 3.500h2.500M2 5.500h2.500M8 3.500h2M8 5.500h2" /></svg>
        </button>
        <button aria-label="Веб-документ" className="ml-[5px]">
          <svg width="13" height="12" viewBox="0 0 13 12"><rect x=".5" y=".5" width="9" height="9" fill="#f4f4f4" stroke="#666" /><path d="M2 2.500h6M2 4.500h6M2 6.500h4" stroke="#888" /><circle cx="9" cy="8" r="3.500" fill="#3572b8" /><path d="M7 7l2-1 1 2-1 2z" fill="#4da14d" /></svg>
        </button>
        <button aria-label="Структура" className="ml-[7px]">
          <svg width="10" height="9" viewBox="0 0 10 9"><path d="M0 .500h7M3 2.500h7M3 4.500h5M5 6.500h5M3 8.500h7" stroke="#777" /></svg>
        </button>
        <button aria-label="Черновик" className="ml-2">
          <svg width="11" height="9" viewBox="0 0 11 9"><path d="M0 .500h11M0 2.500h11M0 4.500h11M0 6.500h11M0 8.500h11" stroke="#555" /></svg>
        </button>
        <button className="ml-3.5 w-[30px] text-left">100%</button>
        <button aria-label="Уменьшить" className="ml-1 flex size-4 items-center justify-center rounded-full border border-[#777d86] bg-white">
          <svg width="8" height="8" viewBox="0 0 8 8"><path d="M0 4h8" stroke="#444" strokeWidth="2" /></svg>
        </button>
        <input
          type="range"
          aria-label="Масштаб"
          defaultValue={50}
          className="h-4 w-[100px] appearance-none bg-[linear-gradient(transparent_7px,#8b92a0_7px,#8b92a0_8px,#eef0f2_8px,#eef0f2_9px,transparent_9px)] [&::-webkit-slider-thumb]:h-3 [&::-webkit-slider-thumb]:w-[9px] [&::-webkit-slider-thumb]:appearance-none [&::-webkit-slider-thumb]:rounded-b-[4px] [&::-webkit-slider-thumb]:border [&::-webkit-slider-thumb]:border-[#6f7580] [&::-webkit-slider-thumb]:bg-[#f4f5f7]"
        />
        <button aria-label="Увеличить" className="mr-1 flex size-4 items-center justify-center rounded-full border border-[#777d86] bg-white">
          <svg width="8" height="8" viewBox="0 0 8 8"><path d="M0 4h8M4 0v8" stroke="#444" strokeWidth="2" /></svg>
        </button>
      </div>
    </footer>
  );
}

function TaskButton({ label, children, dot, w = "w-11" }: { label: string; children: ReactNode; dot?: boolean; w?: string }) {
  return (
    <button aria-label={label} className={clsx("relative flex h-full items-center justify-center", w)}>
      {children}
      {dot && <span className="absolute bottom-1 h-[3px] w-1.5 rounded-full bg-[#7c8c8c]" />}
    </button>
  );
}

function Taskbar() {
  return (
    <footer className="flex h-[47px] shrink-0 items-center bg-linear-to-r from-[#dbf0e5] via-[#c8efee] via-25% to-[#cef1f3] pl-2.5 text-[#1b1b1b]">
      <TaskButton label="Пуск">
        <svg width="23" height="24" viewBox="0 0 23 24">
          <defs><linearGradient id="win" x2="1" y2="1"><stop stopColor="#4cc8f5" /><stop offset="1" stopColor="#0569c9" /></linearGradient></defs>
          <path d="M0 0h11v11.500H0zM12 0h11v11.500H12zM0 12.500h11V24H0zM12 12.500h11V24H12z" fill="url(#win)" />
        </svg>
      </TaskButton>
      <label className="ml-[3px] flex h-8 w-[219px] items-center rounded-full border border-[#b9dcdb] bg-[#f1faf9] pl-[11px]">
        <svg width="16" height="16" viewBox="0 0 16 16" fill="none" stroke="#222" strokeWidth="1.600"><circle cx="6.500" cy="6.500" r="5.300" /><path d="M10.500 10.500L15 15" /></svg>
        <input placeholder="Пошук" aria-label="Пошук" className="ml-2.5 w-[132px] text-[13px] outline-none placeholder:text-[#666]" />
        <svg width="44" height="25" viewBox="0 0 44 25" aria-hidden>
          <path d="M0 22c4-6 38-8 43 0-4 3-38 4-43 0z" fill="#e8c49a" />
          <path d="M3 9l15-2 3 12-15 3z" fill="#eef5ee" stroke="#7cab74" strokeWidth="1.500" />
          <path d="M6 12l10-1.500M7 15l10-1.500" stroke="#9ab" />
          <path d="M14 13l7-9 2 1.500-6.500 9z" fill="#f0a83c" />
          <path d="M21 4l1-2 2 1.500-1 2z" fill="#e0524a" />
          <path d="M28 9c0-9 12-9 12 0l1 12H27z" fill="#1d7ff0" />
          <path d="M31 3.500c0-4 6-4 6 0" fill="none" stroke="#0a56c0" strokeWidth="1.500" />
          <path d="M29 13h10v7H29z" fill="#0b5ed6" />
          <path d="M30 8h8" stroke="#7fc0ff" />
        </svg>
      </label>
      <TaskButton label="Представление задач" w="ml-[3px] w-11">
        <svg width="24" height="24" viewBox="0 0 24 24">
          <path d="M7 0h15a1 1 0 011 1v15H7z" fill="#f4f6f6" />
          <rect x="0" y="6" width="17" height="17" rx="1" fill="#2a2c2c" />
          <rect x="7" y="6" width="10" height="10" fill="#b9bcbc" />
        </svg>
      </TaskButton>
      <TaskButton label="Copilot">
        <svg width="25" height="24" viewBox="0 0 25 24">
          <defs>
            <linearGradient id="cpa" x2=".3" y2="1"><stop stopColor="#1a6fe0" /><stop offset=".45" stopColor="#24b8b4" /><stop offset=".75" stopColor="#8fd04a" /><stop offset="1" stopColor="#f5c02c" /></linearGradient>
            <linearGradient id="cpb" x2=".2" y2="1"><stop stopColor="#9a62e8" /><stop offset=".5" stopColor="#f0609c" /><stop offset="1" stopColor="#f7903c" /></linearGradient>
          </defs>
          <path d="M7 1h8c2.500 0 3 2 3.500 4h-3c-2 0-3 1-3.600 3l-2 7c-.7 2-1.500 3-3.500 3H4c-3 0-4-2.500-3.200-5.500l2-7.500C3.700 2.200 5 1 7 1z" fill="url(#cpa)" />
          <path d="M18 23h-8c-2.500 0-3-2-3.500-4h3c2 0 3-1 3.600-3l2-7c.7-2 1.500-3 3.500-3H21c3 0 4 2.500 3.200 5.500l-2 7.500C21.300 21.800 20 23 18 23z" fill="url(#cpb)" />
          <path d="M10 1h5c2.500 0 3 2 3.500 4h-3c-2 0-3 1-3.500 3z" fill="#1850c4" />
        </svg>
      </TaskButton>
      <TaskButton label="Проводник" dot>
        <svg width="25" height="24" viewBox="0 0 25 24">
          <path d="M0 2.500A1.500 1.500 0 011.500 1h7l2.500 3H24v8H0z" fill="#dba018" />
          <path d="M0 6h9l2-2h12.500A1.500 1.500 0 0125 5.500V23H0z" fill="#fdd04f" />
          <path d="M5 23v-5a2 2 0 012-2h11a2 2 0 012 2v5z" fill="#1577c8" />
          <path d="M8 19.500h9" stroke="#0b5596" strokeWidth="1.500" />
        </svg>
      </TaskButton>
      <TaskButton label="Microsoft Store">
        <svg width="24" height="25" viewBox="0 0 24 25">
          <path d="M6.500 6V2.500a1 1 0 011-1h9a1 1 0 011 1V6" fill="none" stroke="#37b5ea" strokeWidth="2" />
          <path d="M0 5h24v16a3 3 0 01-3 3H3a3 3 0 01-3-3z" fill="#17508c" />
          <path d="M7 10h4.500v4.500H7z" fill="#f25022" />
          <path d="M12.500 10H17v4.500h-4.500z" fill="#7fba00" />
          <path d="M7 15.500h4.500V20H7z" fill="#00a4ef" />
          <path d="M12.500 15.500H17V20h-4.500z" fill="#ffb900" />
        </svg>
      </TaskButton>
      <button aria-label="Word" className="relative ml-[3px] mr-px flex h-[41px] w-[38px] items-center justify-center rounded-[4px] border border-[#e8f8f7] bg-[#e6f7f6] shadow-[inset_-3px_0_0_#d4f1f0]">
        <WordIcon size={22} />
        <span className="absolute bottom-0 h-[3px] w-4 rounded-full bg-[#2b8494]" />
      </button>
      <TaskButton label="Chrome" dot w="ml-0.5 w-11">
        <svg width="24" height="24" viewBox="0 0 24 24">
          <path d="M12 12L1.600 6A12 12 0 0122.400 6z" fill="#e33b2e" />
          <path d="M12 12L22.400 6A12 12 0 0112 24z" fill="#fcc31e" />
          <path d="M12 12l0 12A12 12 0 011.600 6z" fill="#2da04e" />
          <path d="M12 6.500h10.600A12 12 0 0112 24l4.800-9.200z" fill="#fcc31e" />
          <path d="M1.600 6A12 12 0 0122.400 6H12L7.200 14.800z" fill="#e33b2e" />
          <path d="M1.600 6L7.300 14.800 12 17.500l2-.3L12 24A12 12 0 011.600 6z" fill="#2da04e" />
          <circle cx="12" cy="12" r="5.600" fill="#fff" />
          <circle cx="12" cy="12" r="4.400" fill="#3b78e7" />
        </svg>
      </TaskButton>
      <div className="ml-auto flex h-full items-center pr-[19px]">
        <button aria-label="Скрытые значки"><svg width="12" height="8" viewBox="0 0 12 8" fill="none" stroke="currentColor" strokeWidth="1.500"><path d="M1 7l5-5 5 5" /></svg></button>
        <button aria-label="Обновление" className="ml-[17px]">
          <svg width="17" height="17" viewBox="0 0 17 17" fill="none" stroke="currentColor" strokeWidth="1.300">
            <path d="M1 7.500C2 2 11 -1 15 4.500M15 .800v4h-4M7 15c-2 0-4-1-5-3M1.500 16v-4.500h4" />
            <circle cx="12.500" cy="12.500" r="4" fill="#f7960f" stroke="none" />
          </svg>
        </button>
        <button className="ml-[18px] w-6 text-[11px]">УКР</button>
        <button aria-label="Сеть и звук" className="ml-[17px] flex items-center gap-2">
          <svg width="16" height="12" viewBox="0 0 16 12" fill="none" stroke="currentColor" strokeWidth="1.200">
            <path d="M1 4.500c4-4.500 10-4.500 14 0M3.300 6.800c2.700-3 6.700-3 9.400 0M5.600 9c1.300-1.500 3.500-1.500 4.800 0" />
            <circle cx="8" cy="10.700" r="1" fill="currentColor" stroke="none" />
          </svg>
          <svg width="16" height="12" viewBox="0 0 16 12" fill="none" stroke="currentColor"><path d="M1 4h2.500L7 1v10L3.500 8H1zM10.500 3.500l4.500 5M15 3.500l-4.500 5" /></svg>
          <svg width="16" height="10" viewBox="0 0 16 10"><rect x=".6" y=".6" width="12.800" height="8.800" rx="2" fill="none" stroke="currentColor" strokeWidth="1.200" /><rect x="2.200" y="2.200" width="9.600" height="5.600" rx=".6" fill="currentColor" /><path d="M15 3.500v3" stroke="currentColor" strokeWidth="1.300" /></svg>
        </button>
        <button className="ml-[17px] w-[57px] text-right text-[11px] leading-4">
          22:21
          <br />
          12.04.2025
        </button>
      </div>
    </footer>
  );
}

export default function App() {
  return (
    <div className="flex h-screen min-w-[1180px] flex-col overflow-hidden bg-white font-[Open_Sans,Noto_Sans,sans-serif]">
      <TitleBar />
      <TabRow />
      <div className="flex h-[85px] shrink-0 bg-linear-to-b from-white via-[#fbfbfc] to-[#e9ecf0]">
        <ClipboardGroup />
        <FontGroup />
        <ParagraphGroup />
        <StylesGroup />
        <EditingGroup />
      </div>
      <Workspace />
      <StatusBar />
      <Taskbar />
    </div>
  );
}
